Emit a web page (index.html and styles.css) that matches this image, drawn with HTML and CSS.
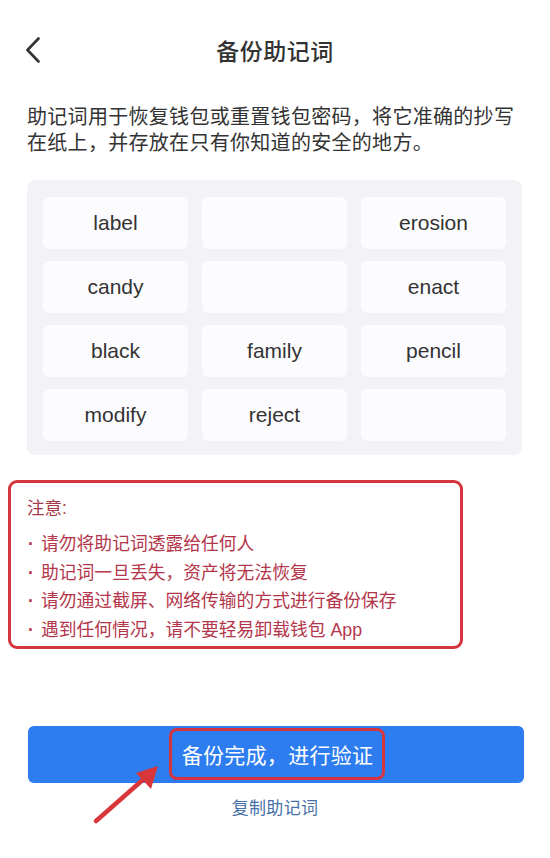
FILE: index.html
```html
<!DOCTYPE html>
<html lang="zh-CN">
<head>
<meta charset="utf-8">
<title>备份助记词</title>
<link rel="stylesheet" href="styles.css">
</head>
<body>
<div class="page">
  <header class="nav">
    <svg class="back" width="16" height="26" viewBox="0 0 16 26" aria-hidden="true">
      <polyline points="13.5,1.5 2.5,13 13.5,24.5" fill="none" stroke="#333" stroke-width="2.6" stroke-linecap="round" stroke-linejoin="round"/>
    </svg>
    <h1 class="title">备份助记词</h1>
  </header>

  <p class="desc">助记词用于恢复钱包或重置钱包密码，将它准确的抄写在纸上，并存放在只有你知道的安全的地方。</p>

  <div class="panel">
    <div class="word">label</div>
    <div class="word"></div>
    <div class="word">erosion</div>
    <div class="word">candy</div>
    <div class="word"></div>
    <div class="word">enact</div>
    <div class="word">black</div>
    <div class="word">family</div>
    <div class="word">pencil</div>
    <div class="word">modify</div>
    <div class="word">reject</div>
    <div class="word"></div>
  </div>

  <section class="notice">
    <div class="notice-title">注意:</div>
    <ul class="notice-list">
      <li>请勿将助记词透露给任何人</li>
      <li>助记词一旦丢失，资产将无法恢复</li>
      <li>请勿通过截屏、网络传输的方式进行备份保存</li>
      <li>遇到任何情况，请不要轻易卸载钱包 App</li>
    </ul>
  </section>

  <div class="actions">
    <button class="primary"><span class="mark">备份完成，进行验证</span></button>
    <a class="copy">复制助记词</a>
    <svg class="arrow" width="80" height="70" viewBox="0 0 80 70" aria-hidden="true">
      <line x1="8" y1="62" x2="58" y2="18" stroke="#d8363b" stroke-width="4.5" stroke-linecap="round"/>
      <polygon points="70,7 48,14 63,30" fill="#d8363b"/>
    </svg>
  </div>
</div>
</body>
</html>
```
FILE: styles.css
```css
* { box-sizing: border-box; }
html, body { margin: 0; padding: 0; background: #fff; }
body {
  font-family: "Liberation Sans", "Noto Sans CJK SC", sans-serif;
  color: #333;
}
.page {
  width: 550px;
  min-height: 858px;
  position: relative;
}
.nav {
  height: 100px;
  display: flex;
  align-items: center;
  justify-content: center;
  position: relative;
}
.back {
  position: absolute;
  left: 25px;
  top: 37px;
}
.title {
  margin: 0;
  font-size: 23px;
  font-weight: 500;
  color: #333;
  letter-spacing: 0.5px;
}
.desc {
  margin: 4px 20px 0 27px;
  font-size: 20px;
  line-height: 26px;
  letter-spacing: 0.3px;
  color: #333;
}
.panel {
  margin: 24px 28px 0 27px;
  background: #f2f2f7;
  border-radius: 8px;
  padding: 17px 16px 14px 16px;
  display: grid;
  grid-template-columns: repeat(3, 145px);
  column-gap: 14px;
  row-gap: 12px;
}
.word {
  height: 52px;
  background: #fcfcfe;
  border-radius: 6px;
  display: flex;
  align-items: center;
  justify-content: center;
  font-size: 21px;
  color: #333;
}
.notice {
  margin: 25px 0 0 8px;
  width: 455px;
  border: 3px solid #d3363f;
  border-radius: 9px;
  padding: 11px 10px 2px 16px;
  color: #b4364a;
}
.notice-title {
  font-size: 17.5px;
  line-height: 28px;
  color: #a33a4a;
}
.notice-list {
  list-style: none;
  margin: 8px 0 0 0;
  padding: 0;
}
.notice-list li {
  font-size: 17.8px;
  line-height: 28.5px;
  display: flex;
}
.notice-list li::before {
  content: "·";
  width: 13px;
  flex: none;
  font-weight: 700;
  padding-left: 1px;
}
.actions {
  position: relative;
  margin-top: 77px;
  display: flex;
  flex-direction: column;
  align-items: center;
}
.primary {
  width: 496px;
  height: 57px;
  margin-left: 1px;
  border: none;
  border-radius: 6px;
  background: #2d7df0;
  color: #fff;
  display: flex;
  align-items: center;
  justify-content: center;
  padding: 0;
  font-family: inherit;
}
.mark {
  display: inline-flex;
  align-items: center;
  justify-content: center;
  height: 52px;
  padding: 0 9px 0 10px;
  border: 3px solid #d3363f;
  border-radius: 8px;
  font-size: 21px;
  letter-spacing: 0.3px;
  margin-left: 3px;
  margin-top: -2px;
}
.copy {
  margin-top: 14px;
  font-size: 17px;
  line-height: 24px;
  color: #4670a8;
  letter-spacing: 0.3px;
}
.arrow {
  position: absolute;
  left: 88px;
  top: 33px;
}
```
